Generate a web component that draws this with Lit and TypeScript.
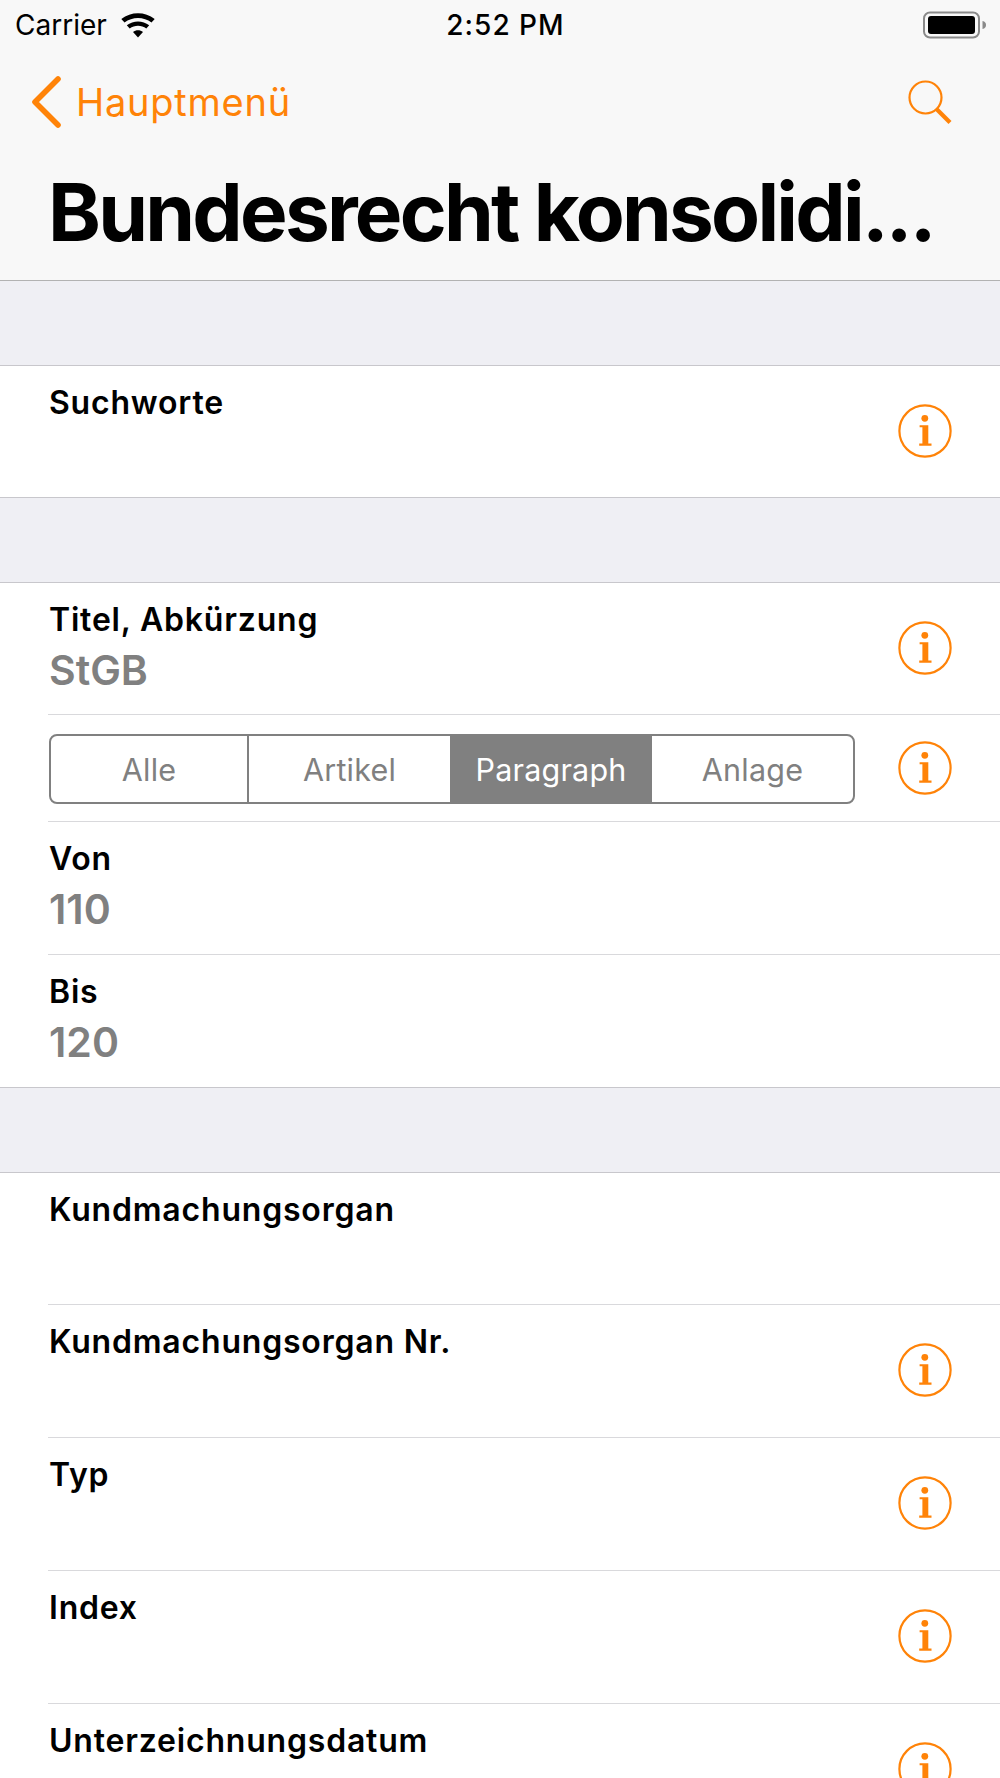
import { LitElement, html, css } from "lit";
import { customElement } from "lit/decorators.js";

const infoIcon = html`<svg class="info" viewBox="0 0 54 54" width="54" height="54">
  <circle cx="27" cy="27" r="25.6" fill="none" stroke="#ff8308" stroke-width="2.2"></circle>
  <circle cx="26.8" cy="14.3" r="3.4" fill="#ff8308"></circle>
  <path d="M21.6 21.200h8.700v18.400h3.200v2.100H21.200v-2.100h3.200V23.300h-2.800z" fill="#ff8308"></path>
</svg>`;

@customElement("app-root")
export class AppRoot extends LitElement {
  static styles = css`
    :host {
      display: block;
      width: 1000px;
      height: 1778px;
      overflow: hidden;
      background: #fff;
      font-family: Inter, "Liberation Sans", sans-serif;
      color: #000;
    }
    .head {
      height: 280px;
      background: #f8f8f8;
      border-bottom: 1px solid #b2b2b2;
      display: flex;
      flex-direction: column;
    }
    .status {
      height: 50px;
      display: flex;
      align-items: center;
      justify-content: space-between;
      padding: 0 13px 0 15px;
      position: relative;
    }
    .status-left {
      display: flex;
      align-items: center;
      gap: 14px;
      font-size: 28px;
    }
    .time {
      position: absolute;
      left: 11px;
      right: 0;
      text-align: center;
      font-size: 28px;
      font-weight: 500;
      letter-spacing: 1px;
    }
    .nav {
      height: 104px;
      display: flex;
      align-items: center;
      justify-content: space-between;
      padding: 0 48px 0 31px;
    }
    .back {
      display: flex;
      align-items: center;
      gap: 15px;
      color: #ff8308;
      font-size: 38px;
      letter-spacing: 0.75px;
    }
    .title {
      margin: 10px 0 0;
      padding: 0 48px;
      font-size: 80px;
      line-height: 96px;
      font-weight: 700;
      letter-spacing: -2.75px;
      white-space: nowrap;
    }
    .gap {
      height: 84px;
      background: #efeff4;
      border-bottom: 1px solid #c8c7cc;
    }
    .section {
      border-bottom: 1px solid #c8c7cc;
    }
    .section.last {
      border-bottom: none;
    }
    .row {
      height: 132px;
      box-sizing: border-box;
      margin-left: 48px;
      padding: 0 48px 0 1px;
      display: flex;
      justify-content: space-between;
      align-items: center;
      border-bottom: 1px solid #d9d9dc;
    }
    .row.tall {
      height: 133px;
    }
    .row.end {
      height: 131px;
      border-bottom: none;
    }
    .row.end.tall {
      height: 132px;
    }
    .text {
      align-self: flex-start;
      padding-top: 17px;
      display: flex;
      flex-direction: column;
      gap: 5px;
    }
    .label {
      font-size: 32px;
      line-height: 40px;
      font-weight: 600;
      letter-spacing: 0.8px;
    }
    .value {
      font-size: 41px;
      line-height: 50px;
      font-weight: 600;
      color: #808080;
    }
    .info {
      display: block;
      flex: none;
      margin-bottom: 2px;
    }
    .row.seg-row {
      height: 107px;
      padding-left: 1px;
    }
    .seg-row .info {
      margin-bottom: 0;
    }
    .seg {
      width: 806px;
      height: 70px;
      margin-top: 2px;
      box-sizing: border-box;
      border: 2px solid #808080;
      border-radius: 8px;
      display: grid;
      grid-template-columns: 196px 203px 202px 1fr;
      overflow: hidden;
      font-size: 30.5px;
      letter-spacing: 0.2px;
      color: #808080;
    }
    .seg div {
      display: flex;
      align-items: center;
      justify-content: center;
    }
    .seg div.divided {
      box-sizing: border-box;
      border-left: 2px solid #808080;
    }
    .seg div.on {
      background: #808080;
      color: #fff;
    }
  `;

  private row(label: string, value = "", info = true, cls = "") {
    return html`<div class="row ${cls}">
      <div class="text">
        <div class="label">${label}</div>
        ${value ? html`<div class="value">${value}</div>` : ""}
      </div>
      ${info ? infoIcon : ""}
    </div>`;
  }

  render() {
    return html`
      <div class="head">
        <div class="status">
          <div class="status-left">
            <span>Carrier</span>
            <svg width="34" height="25" viewBox="0 0 34 25">
              <path d="M17 24.500l-5-5.600c2.900-2.300 7.100-2.300 10 0z" fill="#000"></path>
              <path d="M8.700 15.400l-2.900-3.200c6.500-5.100 15.900-5.100 22.400 0l-2.900 3.200c-4.800-3.600-11.800-3.600-16.600 0z" fill="#000"></path>
              <path d="M3.500 9.600L.3 6.100c9.700-7.800 23.700-7.800 33.400 0l-3.200 3.500C22.800 3.600 11.200 3.600 3.500 9.600z" fill="#000"></path>
            </svg>
          </div>
          <div class="time">2:52 PM</div>
          <svg width="64" height="28" viewBox="0 0 64 28">
            <rect x="1" y="1.500" width="55" height="25" rx="6" fill="none" stroke="#8a8a8a" stroke-width="2"></rect>
            <rect x="5" y="5" width="47" height="18" rx="3" fill="#000"></rect>
            <path d="M59.500 10c2.500.6 3.500 2 3.500 4s-1 3.400-3.500 4z" fill="#8a8a8a"></path>
          </svg>
        </div>
        <div class="nav">
          <div class="back">
            <svg width="30" height="52" viewBox="0 0 30 52">
              <path d="M27 3L4 26l23 23" fill="none" stroke="#ff8308" stroke-width="5.600" stroke-linecap="round" stroke-linejoin="round"></path>
            </svg>
            <span>Hauptmenü</span>
          </div>
          <svg width="44" height="44" viewBox="0 0 44 44">
            <circle cx="17.500" cy="17.500" r="16" fill="none" stroke="#ff8308" stroke-width="2.200"></circle>
            <path d="M28.500 29l13.500 13.500" fill="none" stroke="#ff8308" stroke-width="4.200"></path>
          </svg>
        </div>
        <h1 class="title">Bundesrecht konsolidi...</h1>
      </div>
      <div class="gap"></div>
      <div class="section">${this.row("Suchworte", "", true, "end")}</div>
      <div class="gap"></div>
      <div class="section">
        ${this.row("Titel, Abkürzung", "StGB")}
        <div class="row seg-row">
          <div class="seg">
            <div>Alle</div>
            <div class="divided">Artikel</div>
            <div class="on">Paragraph</div>
            <div>Anlage</div>
          </div>
          ${infoIcon}
        </div>
        ${this.row("Von", "110", false, "tall")}
        ${this.row("Bis", "120", false, "end tall")}
      </div>
      <div class="gap"></div>
      <div class="section last">
        ${this.row("Kundmachungsorgan", "", false)}
        ${this.row("Kundmachungsorgan Nr.", "", true, "tall")}
        ${this.row("Typ", "", true, "tall")}
        ${this.row("Index", "", true, "tall")}
        ${this.row("Unterzeichnungsdatum", "", true, "tall")}
      </div>
    `;
  }
}
